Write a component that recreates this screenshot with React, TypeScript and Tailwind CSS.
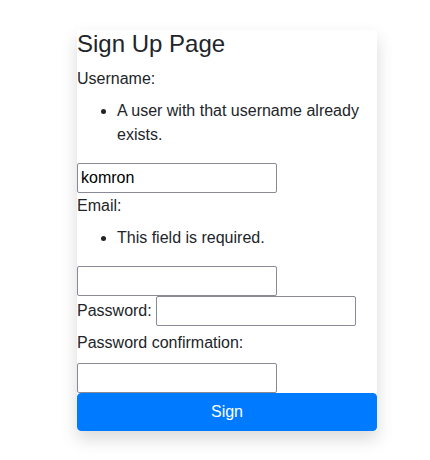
import React from "react";

export default function App() {
  return (
    <div className="min-h-[460px] bg-white pt-[30px] pl-[77px] font-['Liberation_Sans',Arial,sans-serif] text-[#212529]">
      <div className="w-[300px] bg-white shadow-[0_8px_16px_rgba(0,0,0,0.15)] text-base leading-6">
        <h3 className="text-2xl leading-[1.2] font-normal mb-2">Sign Up Page</h3>
        <form onSubmit={(e) => e.preventDefault()}>
          <div>
            <label className="inline-block mb-2">Username:</label>
            <ul className="list-disc pl-10 mb-4">
              <li>A user with that username already exists.</li>
            </ul>
            <input
              type="text"
              defaultValue="komron"
              className="w-[200px] h-[30px] border border-[#8a8a96] rounded-[2px] px-[3px] leading-6 align-baseline text-black bg-white outline-none"
            />
          </div>
          <div className="pt-px">
            <label className="inline-block mb-2">Email:</label>
            <ul className="list-disc pl-10 mb-4">
              <li>This field is required.</li>
            </ul>
            <input
              type="email"
              className="w-[200px] h-[30px] border border-[#8a8a96] rounded-[2px] px-[3px] leading-6 align-baseline bg-white outline-none"
            />
          </div>
          <div>
            <label className="inline-block mb-2">Password:</label>{" "}
            <input
              type="password"
              className="w-[200px] h-[30px] border border-[#8a8a96] rounded-[2px] px-[3px] leading-6 align-baseline bg-white outline-none"
            />
          </div>
          <div>
            <label className="inline-block mb-2">Password confirmation:</label>{" "}
            <input
              type="password"
              className="w-[200px] h-[30px] border border-[#8a8a96] rounded-[2px] px-[3px] leading-6 align-baseline bg-white outline-none"
            />
          </div>
          <button
            type="submit"
            className="block w-full h-[38px] bg-[#007bff] border border-[#007bff] text-white rounded-[4px] text-base leading-6 py-1.5 px-3"
          >
            Sign
          </button>
        </form>
      </div>
    </div>
  );
}
